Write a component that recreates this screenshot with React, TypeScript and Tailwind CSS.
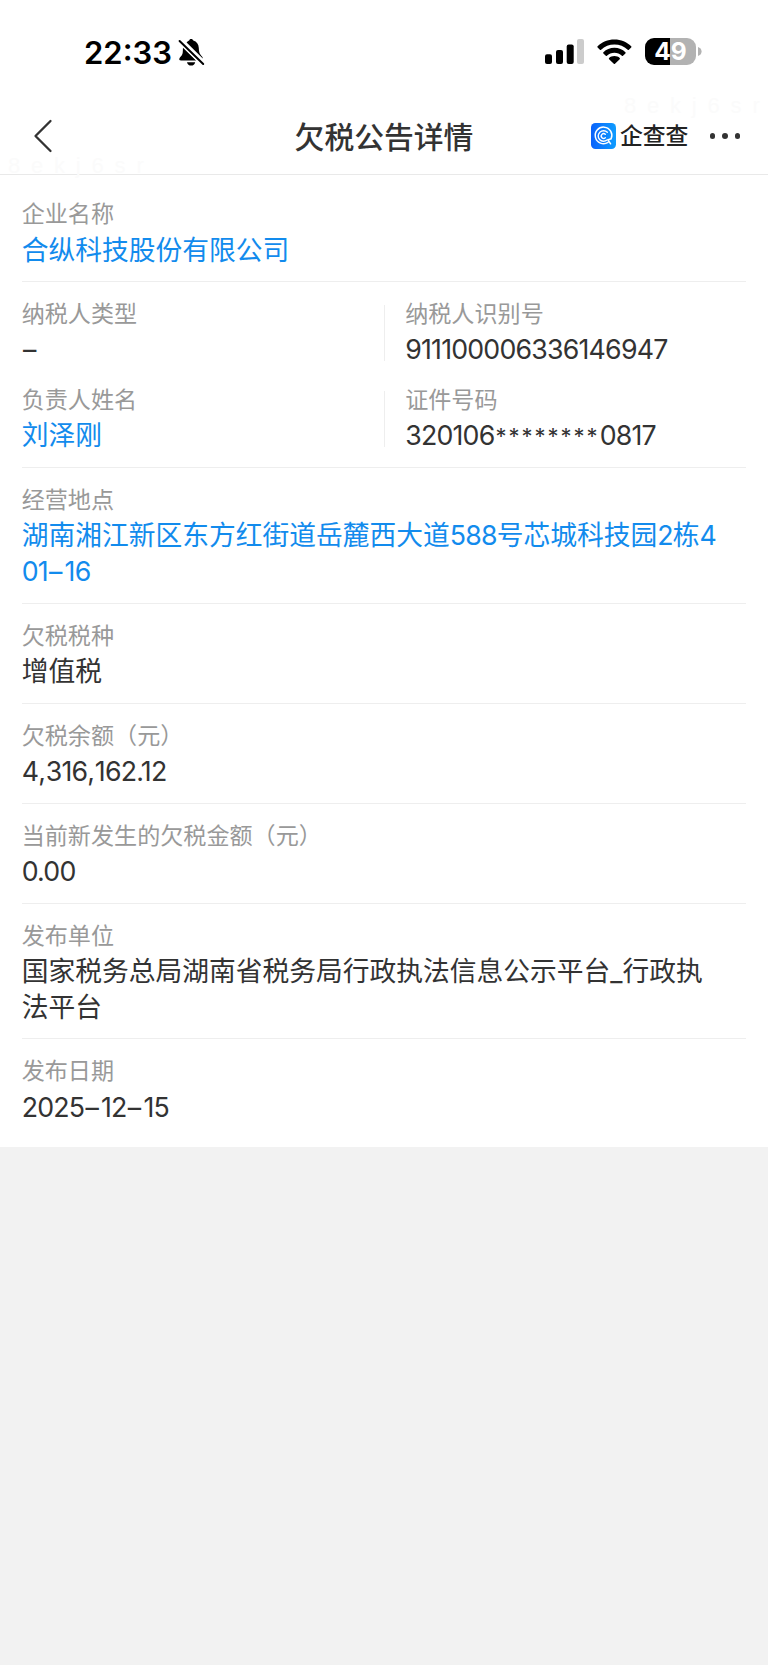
import React from "react";

interface FieldProps {
  label: string;
  value: string;
  link?: boolean;
}

const MARK = "8ekj6sr";

// digits sit tighter than the CJK text, separators a bit looser
const trackingOf = (part: string) => {
  if (/^\d/.test(part)) return "tracking-[-0.8px]";
  if (part === ",") return "tracking-[-0.2px]";
  if (part === ".") return "tracking-[-0.8px]";
  if (part === "–") return "tracking-[2.2px] pl-[1.2px]";
  if (part.startsWith("*"))
    return "text-[22px] leading-none tracking-[2px] pl-[1px] align-[1.5px]";
  return "";
};

const Field: React.FC<FieldProps> = ({ label, value, link }) => (
  <div>
    <div className="h-[36.5px] pt-[1px] text-[23.1px] leading-[34px] text-[#999999]">
      {label}
    </div>
    <div
      className={`break-all text-[26.75px] leading-[35.8px] ${
        link ? "text-[#128bed]" : "text-[#333333]"
      }`}
    >
      {value.split(/(\d+|,|\.|–|\*+)/).map((part, index) => (
        <span key={index} className={trackingOf(part)}>
          {part}
        </span>
      ))}
    </div>
  </div>
);

const Section: React.FC<FieldProps> = (props) => (
  <div className="border-t border-[#eeeeee] pt-[14px] pr-[20px] pb-[12.7px]">
    <Field {...props} />
  </div>
);

const PairRow: React.FC<{ left: FieldProps; right: FieldProps }> = ({
  left,
  right,
}) => (
  <div className="flex">
    <div className="w-[362px]">
      <Field {...left} />
    </div>
    <div className="mt-[9px] mb-[7px] w-px bg-[#eeeeee]"></div>
    <div className="flex-1 pl-[20.5px]">
      <Field {...right} />
    </div>
  </div>
);

const BellOff = () => (
  <svg width="27" height="30" viewBox="0 0 27 30" className="ml-[6px]">
    <path
      d="M8.6 4.4C9.5 3.4 10.5 2.9 11.2 2.6C11.6 1.4 12.3 1 13.2 1C14.2 1 15 1.5 15.3 2.6C18.7 3.6 20.6 6.2 20.8 10C21 14.4 21.4 15.6 24 18.4C24.8 19.3 24.9 20 24.8 20.5Z"
      fill="#000"
    />
    <path
      d="M5 9.4L18.2 22.4H3C1.5 22.4 1 21.5 1.4 20.4C1.9 19.1 3.6 18.1 4.4 16C5 14.2 4.8 12 5 9.4Z"
      fill="#000"
    />
    <path d="M9 24.2H17.2C16.7 26.4 15.2 27.6 13.1 27.6C11 27.6 9.5 26.4 9 24.2Z" fill="#000" />
    <path d="M1.6 3L25.2 26" stroke="#fff" strokeWidth="4.6" />
    <path d="M1.6 3L25.2 26" stroke="#000" strokeWidth="2" strokeLinecap="round" />
  </svg>
);

const Signal = () => (
  <svg width="40" height="26" viewBox="0 0 40 26">
    <rect x="0" y="15.2" width="7" height="9.8" rx="2" fill="#000" />
    <rect x="11" y="11" width="7" height="14" rx="2" fill="#000" />
    <rect x="21.7" y="5.6" width="7" height="19.4" rx="2" fill="#000" />
    <rect x="32" y="0" width="7" height="25" rx="2" fill="#cccccc" />
  </svg>
);

const Wifi = () => (
  <svg width="35" height="26" viewBox="0 0 35 26" className="ml-[12px]">
    <path
      d="M17.4 0.5C24 0.5 30 3.1 34.2 7.3C34.6 7.7 34.6 8.1 34.2 8.5L31.9 10.8C31.5 11.2 31.1 11.2 30.7 10.8C27.1 7.4 22.5 5.5 17.4 5.5C12.3 5.5 7.7 7.4 4.1 10.8C3.7 11.2 3.3 11.2 2.9 10.8L0.6 8.5C0.2 8.1 0.2 7.7 0.6 7.3C4.8 3.1 10.8 0.5 17.4 0.5Z"
      fill="#000"
    />
    <path
      d="M17.4 8.8C21.7 8.8 25.6 10.5 28.4 13.2C28.8 13.6 28.8 14 28.4 14.4L26 16.7C25.6 17.1 25.3 17.1 24.9 16.7C22.9 14.9 20.3 13.8 17.4 13.8C14.5 13.8 11.9 14.9 9.9 16.7C9.5 17.1 9.2 17.1 8.8 16.7L6.4 14.4C6 14 6 13.6 6.4 13.2C9.2 10.5 13.1 8.8 17.4 8.8Z"
      fill="#000"
    />
    <path
      d="M17.4 17.1C19.5 17.1 21.4 17.8 22.7 19C23.1 19.4 23.1 19.8 22.7 20.2L18 24.8C17.6 25.2 17.2 25.2 16.8 24.8L12.1 20.2C11.7 19.8 11.7 19.4 12.1 19C13.4 17.8 15.3 17.1 17.4 17.1Z"
      fill="#000"
    />
  </svg>
);

const Battery = () => (
  <div className="ml-[13px] flex items-center">
    <div className="flex h-[27px] w-[51px] items-center justify-center rounded-[9px] bg-linear-to-r from-black from-[50%] to-[#b2b2b2] to-[50%] font-['Inter'] text-[24.5px] font-bold text-white">
      49
    </div>
    <svg width="4" height="9" viewBox="0 0 4 9" className="ml-[2px]">
      <path d="M0 0C2 0.6 3.6 2.2 3.6 4.5C3.6 6.8 2 8.4 0 9Z" fill="#b2b2b2" />
    </svg>
  </div>
);

const BrandLogo = () => (
  <svg width="25" height="26" viewBox="0 0 25 26">
    <defs>
      <linearGradient id="brand" x1="0" y1="0" x2="1" y2="0">
        <stop offset="0" stopColor="#0a62fb" />
        <stop offset="1" stopColor="#0f9dff" />
      </linearGradient>
    </defs>
    <rect width="25" height="26" rx="4.5" fill="url(#brand)" />
    <g fill="none" stroke="#fff" strokeLinecap="round">
      <path d="M17 19.4A8.3 8.3 0 1 1 20.1 15.8L17 16.8L19.6 20.8" strokeWidth="1.5" />
      <path d="M16.3 9.3A5.3 5.3 0 1 0 16 17" strokeWidth="1.4" />
      <path d="M14.3 11.3A2.4 2.4 0 1 0 14.3 14.8" strokeWidth="1.4" />
    </g>
  </svg>
);

export default function App() {
  return (
    <div className="min-h-[1665px] w-[768px] bg-[#f2f2f2] font-['Inter','Noto_Sans_CJK_SC',sans-serif]">
      <div className="h-[1147px] bg-white">
        <div className="flex h-[104px] items-start justify-between pr-[66px] pl-[84px]">
          <div className="flex items-center pt-[38px]">
            <span className="text-[31px] leading-[30px] font-semibold text-black">
              22:33
            </span>
            <BellOff />
          </div>
          <div className="flex items-center pt-[38px]">
            <Signal />
            <Wifi />
            <Battery />
          </div>
        </div>

        <div className="relative flex h-[71px] items-center justify-center border-b border-[#e9e9e9]">
          <span className="absolute top-[-13px] left-[624px] font-['Liberation_Sans'] text-[22px] leading-[30px] tracking-[10.8px] text-[#fbfbfb]">
            {MARK}
          </span>
          <span className="absolute top-[47px] left-[8px] font-['Liberation_Sans'] text-[22px] leading-[30px] tracking-[10.8px] text-[#fbfbfb]">
            {MARK}
          </span>
          <svg
            width="20"
            height="34"
            viewBox="0 0 20 34"
            className="absolute top-[15px] left-[33px]"
          >
            <path
              d="M17.5 2L2.5 17L17.5 32"
              fill="none"
              stroke="#333"
              strokeWidth="2.3"
              strokeLinecap="round"
              strokeLinejoin="round"
            />
          </svg>
          <h1 className="pb-[4px] text-[29.8px] leading-[40px] font-medium text-[#333333]">
            欠税公告详情
          </h1>
          <div className="absolute top-[19px] left-[591px] flex items-center">
            <BrandLogo />
            <span className="ml-[4px] text-[22.8px] leading-[26px] font-medium text-[#222222]">
              企查查
            </span>
            <div className="ml-[21.5px] flex gap-[7px]">
              <i className="size-[5.5px] rounded-full bg-[#333333]"></i>
              <i className="size-[5.5px] rounded-full bg-[#333333]"></i>
              <i className="size-[5.5px] rounded-full bg-[#333333]"></i>
            </div>
          </div>
        </div>

        <div className="px-[21.7px] pt-[6px]">
          <div className="pt-[15px] pb-[12.7px]">
            <Field label="企业名称" value="合纵科技股份有限公司" link />
          </div>
          <div className="flex flex-col gap-[13.5px] border-t border-[#eeeeee] pt-[14px] pb-[12.7px]">
            <PairRow
              left={{ label: "纳税人类型", value: "–" }}
              right={{ label: "纳税人识别号", value: "911100006336146947" }}
            />
            <PairRow
              left={{ label: "负责人姓名", value: "刘泽刚", link: true }}
              right={{ label: "证件号码", value: "320106********0817" }}
            />
          </div>
          <Section
            label="经营地点"
            value="湖南湘江新区东方红街道岳麓西大道588号芯城科技园2栋401–16"
            link
          />
          <Section label="欠税税种" value="增值税" />
          <Section label="欠税余额（元）" value="4,316,162.12" />
          <Section label="当前新发生的欠税金额（元）" value="0.00" />
          <Section
            label="发布单位"
            value="国家税务总局湖南省税务局行政执法信息公示平台_行政执法平台"
          />
          <Section label="发布日期" value="2025–12–15" />
        </div>
      </div>
    </div>
  );
}
